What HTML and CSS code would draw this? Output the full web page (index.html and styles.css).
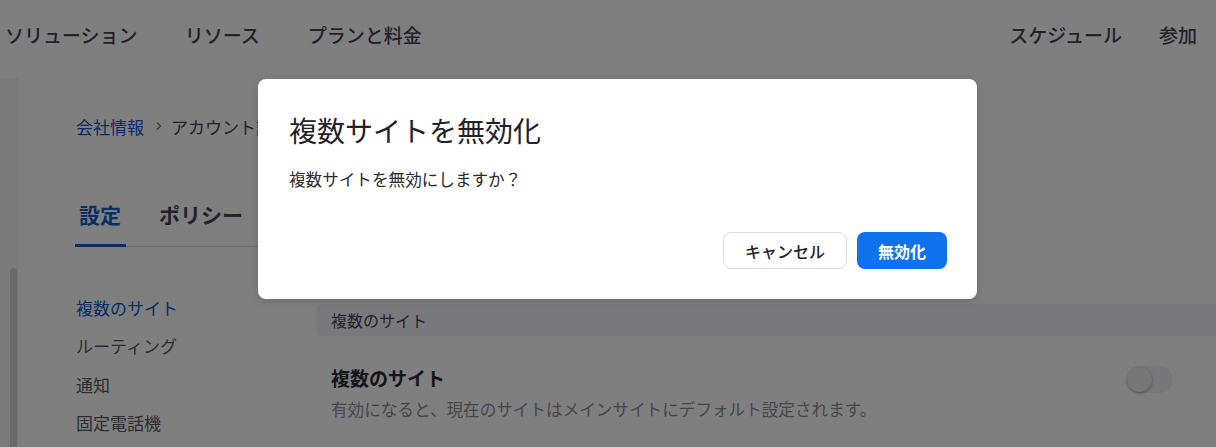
FILE: index.html
```html
<!DOCTYPE html>
<html lang="ja">
<head>
<meta charset="utf-8">
<link rel="stylesheet" href="styles.css">
</head>
<body>
<header class="topbar">
  <nav class="nav-left">
    <span class="nav-item">ソリューション</span>
    <span class="nav-item">リソース</span>
    <span class="nav-item">プランと料金</span>
  </nav>
  <nav class="nav-right">
    <span class="nav-item">スケジュール</span>
    <span class="nav-item">参加</span>
  </nav>
</header>
<div class="page">
  <aside class="rail"><div class="thumb"></div></aside>
  <main class="main">
    <div class="crumbs">
      <span class="crumb-link">会社情報</span>
      <svg class="chev" width="8" height="12" viewBox="0 0 8 12"><path d="M2 2.5 L5.5 6 L2 9.5" fill="none" stroke="currentColor" stroke-width="1.4"/></svg>
      <span class="crumb-cur">アカウント設定</span>
    </div>
    <div class="tabs">
      <span class="tab active">設定</span>
      <span class="tab">ポリシー</span>
    </div>
    <div class="body">
      <ul class="side">
        <li class="side-item active">複数のサイト</li>
        <li class="side-item">ルーティング</li>
        <li class="side-item">通知</li>
        <li class="side-item">固定電話機</li>
      </ul>
      <section class="content">
        <div class="section-bar">複数のサイト</div>
        <div class="setting">
          <div class="setting-text">
            <div class="setting-title">複数のサイト</div>
            <div class="setting-desc">有効になると、現在のサイトはメインサイトにデフォルト設定されます。</div>
          </div>
          <div class="toggle"><div class="knob"></div></div>
        </div>
      </section>
    </div>
  </main>
</div>
<div class="overlay"></div>
<div class="modal">
  <h2 class="modal-title">複数サイトを無効化</h2>
  <p class="modal-text">複数サイトを無効にしますか？</p>
  <div class="modal-actions">
    <button class="btn btn-cancel">キャンセル</button>
    <button class="btn btn-primary">無効化</button>
  </div>
</div>
</body>
</html>
```
FILE: styles.css
```css
* { box-sizing: border-box; }
html, body { margin: 0; padding: 0; }
body {
  width: 1216px;
  height: 447px;
  overflow: hidden;
  background: #ffffff;
  font-family: "Noto Sans CJK JP", "Noto Sans", sans-serif;
  color: #4a4a5a;
  position: relative;
}
.topbar {
  height: 78px;
  display: flex;
  justify-content: space-between;
  align-items: center;
  padding: 0 19px 10px 5px;
  background: #fff;
}
.nav-left, .nav-right { display: flex; align-items: center; }
.nav-left .nav-item + .nav-item { margin-left: 47px; }
.nav-left .nav-item:nth-child(3) { margin-left: 48px; }
.nav-right { gap: 37px; }
.nav-item {
  font-size: 19px;
  font-weight: 500;
  color: #45455a;
  line-height: 1;
}
.page {
  display: flex;
  height: 369px;
}
.rail {
  width: 18px;
  flex: none;
  background: #f6f6f6;
  border-right: 1px solid #ececec;
  padding: 190px 0 0 10px;
}
.thumb {
  width: 7px;
  height: 200px;
  background: #d6d6d6;
  border-radius: 4px 4px 0 0;
}
.main {
  flex: 1;
  padding: 36px 0 0 58px;
}
.crumbs {
  display: flex;
  align-items: center;
  height: 24px;
  font-size: 17px;
  line-height: 1;
}
.crumb-link { color: #0e5ec9; }
.chev { color: #7a7a8a; margin: 0 8px 0 11px; }
.crumb-cur { color: #444450; }
.tabs {
  margin-top: 59px;
  width: 900px;
  display: flex;
  gap: 30px;
  border-bottom: 1px solid #d8d8dc;
  height: 50px;
}
.tab {
  font-size: 21px;
  font-weight: 700;
  color: #45455a;
  line-height: 1;
  padding: 7px 2px 0 3px;
  margin-bottom: -1px;
}
.tab.active {
  color: #0e5ec9;
  border-bottom: 3px solid #0e5ec9;
  padding: 7px 5px 0 4px;
  margin-left: -1px;
}
.body {
  display: flex;
  margin-top: 57px;
}
.side {
  list-style: none;
  margin: -8px 0 0 0;
  padding: 0;
  width: 240px;
  flex: none;
}
.side-item {
  font-size: 17px;
  line-height: 24px;
  height: 38.4px;
  color: #5a5a66;
}
.side-item.active { color: #0e5ec9; }
.content { flex: 1; }
.section-bar {
  height: 32px;
  background: #f3f3f8;
  border-radius: 6px 0 0 6px;
  padding-left: 15px;
  font-size: 16px;
  line-height: 32px;
  color: #45455a;
}
.setting {
  display: flex;
  justify-content: space-between;
  align-items: center;
  padding: 28px 43px 0 15px;
}
.setting-title {
  font-size: 19px;
  font-weight: 700;
  color: #2a2a35;
  line-height: 28px;
}
.setting-desc {
  font-size: 16.6px;
  color: #8e8e98;
  line-height: 26px;
  margin-top: 4px;
}
.toggle {
  width: 46px;
  height: 27px;
  border-radius: 14px;
  background: #f0f0f4;
  position: relative;
  margin-top: -28px;
}
.knob {
  position: absolute;
  left: 0;
  top: 1px;
  width: 25px;
  height: 25px;
  border-radius: 50%;
  background: #eeeeee;
  box-shadow: 0 1px 3px rgba(0,0,0,0.35);
}
.overlay {
  position: absolute;
  inset: 0;
  background: rgba(0,0,0,0.5);
}
.modal {
  position: absolute;
  left: 258px;
  top: 79px;
  width: 719px;
  height: 220px;
  background: #fff;
  border-radius: 8px;
  padding: 31px 30px 30px 31px;
  display: flex;
  flex-direction: column;
  box-shadow: 0 2px 8px rgba(0,0,0,0.15);
}
.modal-title {
  margin: 0;
  font-size: 28px;
  font-weight: 400;
  line-height: 40px;
  color: #222228;
}
.modal-text {
  margin: 17px 0 0 0;
  font-size: 16.6px;
  line-height: 24px;
  color: #2a2a30;
}
.modal-actions {
  margin-top: auto;
  display: flex;
  justify-content: flex-end;
  gap: 10px;
}
.btn {
  height: 37px;
  border-radius: 8px;
  font-family: "Noto Sans CJK JP", "Noto Sans", sans-serif;
  font-size: 16px;
  font-weight: 700;
  line-height: 1;
  cursor: pointer;
}
.btn-cancel {
  width: 124px;
  background: #fff;
  border: 1px solid #dcdce0;
  color: #222228;
  font-weight: 500;
}
.btn-primary {
  width: 90px;
  background: #0e72ed;
  border: none;
  color: #fff;
}
```
